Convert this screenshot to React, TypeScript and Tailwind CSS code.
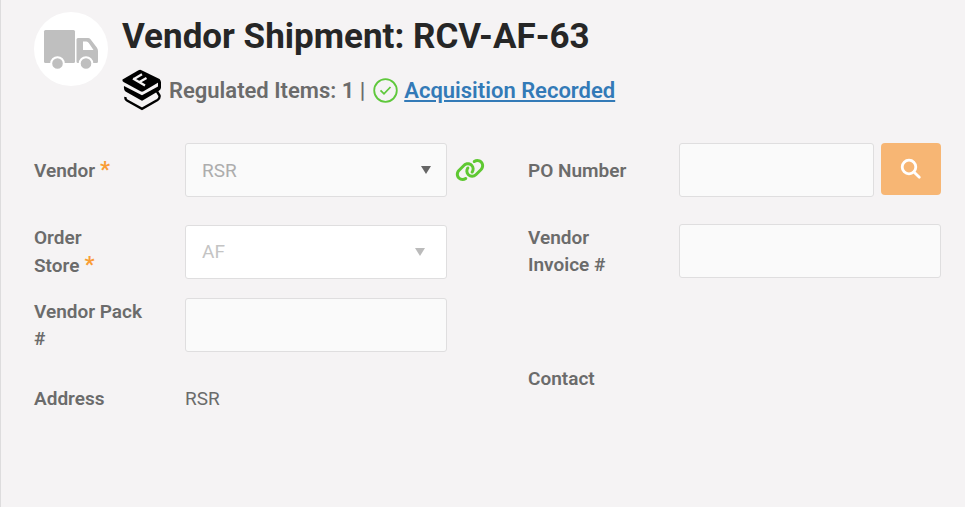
import { useState } from 'react'
import type { ReactNode } from 'react'
import { FaLink } from 'react-icons/fa6'

const inputClass =
  'block w-full min-w-0 h-[54px] rounded-[3px] border border-[#dfdedf] bg-[#fafafa] px-4 text-[19px] focus:outline-none'

function TruckIcon() {
  return (
    <svg width="74" height="74" viewBox="0 0 74 74" aria-hidden="true">
      <circle cx="37" cy="37" r="37" fill="#fff" />
      <g fill="#bfbfbf">
        <rect x="10" y="18" width="31" height="33" rx="1.5" />
        <path
          fillRule="evenodd"
          d="M44 26H54Q55.500 26 56.500 27.200L62.800 35.500Q64 37 64 39V49.500Q64 51 62.500 51H44Q42.500 51 42.500 49.500V27.500Q42.500 26 44 26ZM49 29.500V38H59.500L54.800 31Q53.800 29.500 52.500 29.500Z"
        />
      </g>
      <g fill="#bfbfbf" stroke="#fff" strokeWidth="2">
        <circle cx="23.500" cy="51.500" r="6.300" />
        <circle cx="52" cy="51.500" r="6.300" />
      </g>
    </svg>
  )
}

function BooksIcon() {
  return (
    <svg width="39" height="42" viewBox="0 0 39 42" aria-hidden="true">
      <path d="M.5 10.500L16.500 1.300Q18 .5 19.500 1.200L37.500 10L38 12.500L21.500 22.300Q20 23 18.500 22.300L1.500 13Q0 12 .5 10.500Z" />
      <path d="M2 17L20 26.300L36 17.500V12L37.500 10Q39.300 12 39 15V18.500Q39 20.500 37 21.700L21 31.300Q20 32 19 31.300L3.500 22.500Q1.500 21 2 17Z" />
      <path d="M3.500 28Q3 30.500 5 31.500L20 39.800L35.500 31Q38 29.500 37.500 26.500L35 22.500" fill="none" stroke="#000" strokeWidth="2.400" />
      <path d="M11 9.500L23 16.500M12 10L20 5.300M17.500 13L24.500 9" fill="none" stroke="#f5f3f4" strokeWidth="2.300" />
    </svg>
  )
}

function CheckIcon() {
  return (
    <svg width="25" height="25" viewBox="0 0 25 25" fill="none" stroke="#5fc83c" strokeWidth="1.800" aria-hidden="true">
      <circle cx="12.500" cy="12.500" r="11.300" />
      <path d="M7.500 12.300L11 15.800L17.500 9" />
    </svg>
  )
}

function SearchIcon() {
  return (
    <svg width="22" height="22" viewBox="0 0 22 22" fill="none" stroke="#fff" strokeWidth="2.800" strokeLinecap="round" aria-hidden="true">
      <circle cx="9" cy="9" r="6.800" />
      <path d="M14.200 14.200L19.300 19.300" />
    </svg>
  )
}

function Arrow({ className }: { className: string }) {
  return (
    <svg width="10" height="8" viewBox="0 0 10 8" fill="currentColor" className={`pointer-events-none absolute top-[23px] ${className}`} aria-hidden="true">
      <path d="M0 0H10L5 8Z" />
    </svg>
  )
}

function Label({ htmlFor, required, children }: { htmlFor: string; required?: boolean; children: ReactNode }) {
  return (
    <label htmlFor={htmlFor} className="pr-[42px] font-semibold">
      {children}
      {required && <span className="ml-[5px] text-[22px] font-bold text-[#f99d36]">*</span>}
    </label>
  )
}

export default function App() {
  const [poNumber, setPoNumber] = useState('')
  const [invoice, setInvoice] = useState('')
  const [pack, setPack] = useState('')

  return (
    <main className="min-h-screen border-l border-[#dddcdd] bg-[#f5f3f4] pt-3 pr-6 pb-10 pl-[33px] font-['Roboto',sans-serif] text-[19px] leading-[27px] text-[#6b6b6b]">
      <header className="flex gap-[14px]">
        <div className="shrink-0">
          <TruckIcon />
        </div>
        <div>
          <h1 className="text-[35px] leading-[50px] font-bold text-[#262626]">Vendor Shipment: RCV-AF-63</h1>
          <div className="mt-[7px] flex items-center text-[22px] font-semibold">
            <BooksIcon />
            <span className="ml-2">Regulated Items: 1 |</span>
            <span className="mr-[6px] ml-2">
              <CheckIcon />
            </span>
            <a href="#acquisition" className="text-[#337ab7] underline">
              Acquisition Recorded
            </a>
          </div>
        </div>
      </header>

      <form className="mt-8 grid grid-cols-[151px_1fr_81px_151px_1fr] items-start" onSubmit={(e) => e.preventDefault()}>
        {/* Order details */}
        <div className="col-span-3 grid grid-cols-subgrid items-center">
          <Label htmlFor="vendor" required>Vendor</Label>
          <div className="relative">
            <select id="vendor" defaultValue="RSR" className={`${inputClass} appearance-none text-[#adadad]`}>
              <option>RSR</option>
            </select>
            <Arrow className="right-4 text-[#666]" />
          </div>
          <a href="#vendor" aria-label="Open vendor" className="ml-2 justify-self-start text-[#5fc832]">
            <FaLink className="h-6 w-[30px]" />
          </a>

          <div className="col-span-3 mt-[27px] grid grid-cols-subgrid items-center">
            <Label htmlFor="store" required>Order Store</Label>
            <div className="relative">
              <select id="store" defaultValue="AF" disabled className={`${inputClass} appearance-none bg-white text-[#c4c4c4] opacity-100`}>
                <option>AF</option>
              </select>
              <Arrow className="right-[22px] text-[#bbb]" />
            </div>
          </div>

          <div className="col-span-3 mt-[19px] grid grid-cols-subgrid items-center">
            <Label htmlFor="pack">Vendor Pack #</Label>
            <input id="pack" value={pack} onChange={(e) => setPack(e.target.value)} className={inputClass} />
          </div>

          <div className="col-span-3 mt-[33px] grid grid-cols-subgrid">
            <span className="font-semibold">Address</span>
            <span>RSR</span>
          </div>
        </div>

        {/* Purchase details */}
        <div className="col-span-2 grid grid-cols-subgrid items-center">
          <Label htmlFor="po">PO Number</Label>
          <div className="flex gap-[7px]">
            <input id="po" value={poNumber} onChange={(e) => setPoNumber(e.target.value)} className={inputClass} />
            <button
              type="submit"
              aria-label="Search"
              className="flex h-[52px] w-[60px] shrink-0 items-center justify-center rounded-[4px] bg-[#f7b674]"
            >
              <SearchIcon />
            </button>
          </div>

          <div className="col-span-2 mt-[27px] grid grid-cols-subgrid items-center">
            <Label htmlFor="invoice">Vendor Invoice #</Label>
            <input id="invoice" value={invoice} onChange={(e) => setInvoice(e.target.value)} className={inputClass} />
          </div>

          <span className="mt-[87px] font-semibold">Contact</span>
        </div>
      </form>
    </main>
  )
}
